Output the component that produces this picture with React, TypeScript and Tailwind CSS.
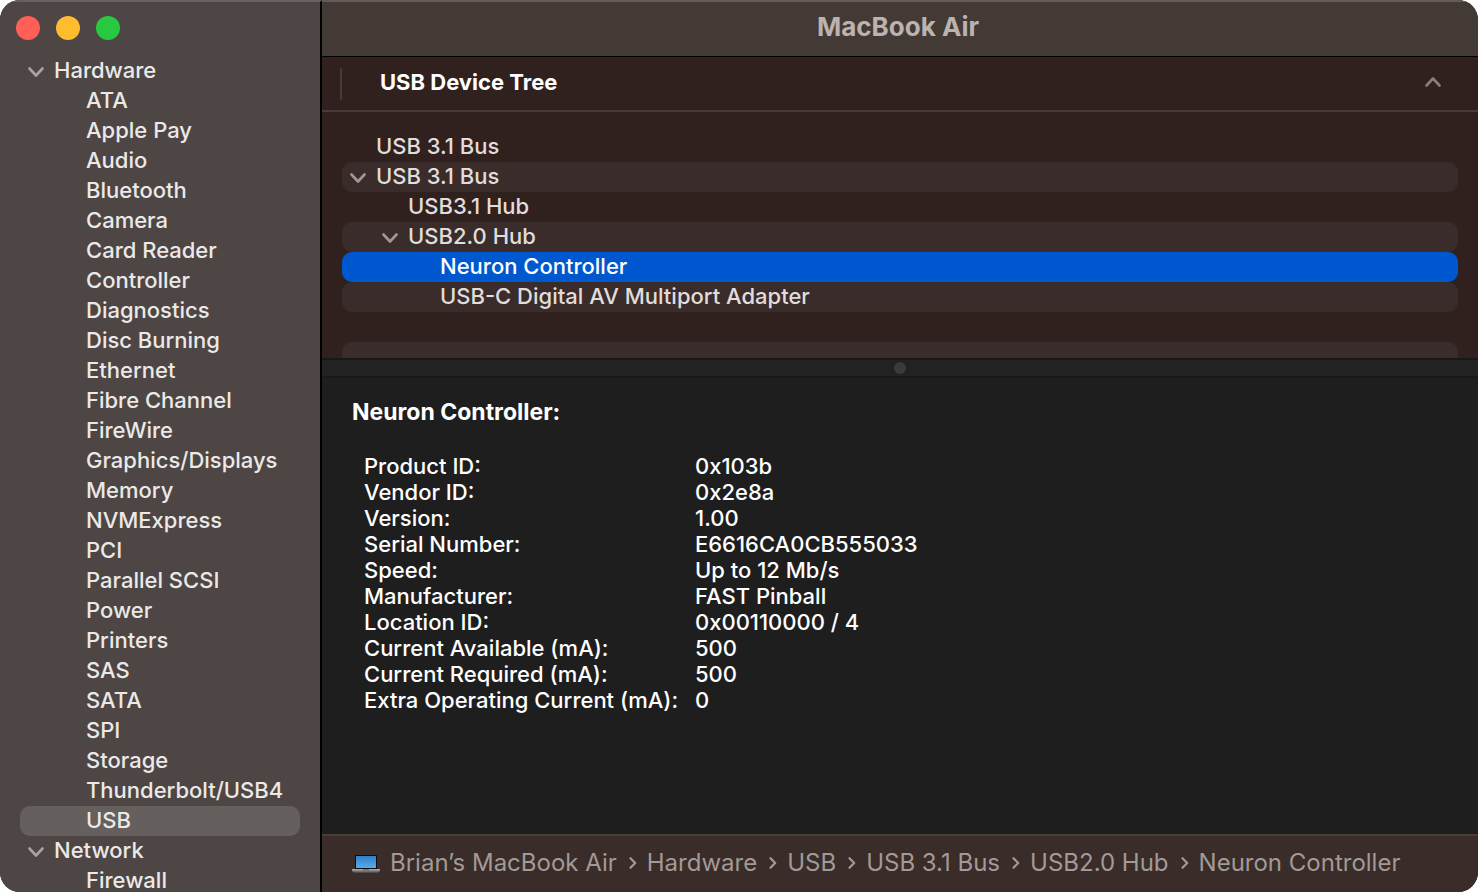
import { useState } from 'react';
import clsx from 'clsx';

const hardware = [
  'ATA', 'Apple Pay', 'Audio', 'Bluetooth', 'Camera', 'Card Reader', 'Controller',
  'Diagnostics', 'Disc Burning', 'Ethernet', 'Fibre Channel', 'FireWire',
  'Graphics/Displays', 'Memory', 'NVMExpress', 'PCI', 'Parallel SCSI', 'Power',
  'Printers', 'SAS', 'SATA', 'SPI', 'Storage', 'Thunderbolt/USB4', 'USB',
];

const network = ['Firewall'];

const devices = [
  { name: 'USB 3.1 Bus', indent: 'pl-[34px]' },
  { name: 'USB 3.1 Bus', indent: 'pl-2', open: true },
  { name: 'USB3.1 Hub', indent: 'pl-[66px]' },
  { name: 'USB2.0 Hub', indent: 'pl-10', open: true },
  { name: 'Neuron Controller', indent: 'pl-[98px]' },
  { name: 'USB-C Digital AV Multiport Adapter', indent: 'pl-[98px]' },
];

const details = [
  ['Product ID:', '0x103b'],
  ['Vendor ID:', '0x2e8a'],
  ['Version:', '1.00'],
  ['Serial Number:', 'E6616CA0CB555033'],
  ['Speed:', 'Up to 12 Mb/s'],
  ['Manufacturer:', 'FAST Pinball'],
  ['Location ID:', '0x00110000 / 4'],
  ['Current Available (mA):', '500'],
  ['Current Required (mA):', '500'],
  ['Extra Operating Current (mA):', '0'],
];

const path = ['Brian’s MacBook Air', 'Hardware', 'USB', 'USB 3.1 Bus', 'USB2.0 Hub', 'Neuron Controller'];

function Chevron({ className }: { className?: string }) {
  return (
    <svg viewBox="0 0 16 10" className={clsx('h-[10px] w-4 shrink-0', className)} fill="none" stroke="currentColor" strokeWidth="2.6" strokeLinecap="round" strokeLinejoin="round">
      <path d="M1.500 1.500 8 8.500l6.500-7" />
    </svg>
  );
}

function Laptop() {
  return (
    <svg viewBox="0 0 28 18" className="h-[18px] w-7 shrink-0">
      <defs>
        <linearGradient id="screen" x1="0" y1="0" x2="0" y2="1">
          <stop offset="0" stopColor="#2f7fc4" />
          <stop offset="1" stopColor="#58acee" />
        </linearGradient>
      </defs>
      <rect x="3" y="0" width="22" height="15" rx="1" fill="#0c0c0c" />
      <rect x="4" y="1" width="20" height="12" fill="url(#screen)" />
      <path d="M0 14h28v2l-2 1.500H2L0 16z" fill="#6d6f70" />
      <path d="M0 14h28v1.500H0z" fill="#a2a4a5" />
      <path d="M11 14h6v1.500h-6z" fill="#6d6f70" />
    </svg>
  );
}

function Group({ title, items, selected, onSelect }: { title: string; items: string[]; selected: string; onSelect: (item: string) => void }) {
  return (
    <li>
      <button type="button" aria-expanded="true" className="flex h-[30px] w-full items-center gap-[10px] pb-[2px] pl-2">
        <Chevron className="mt-1 text-[#a8a3a1]" />
        {title}
      </button>
      <ul>
        {items.map((item) => (
          <li key={item}>
            <button
              type="button"
              onClick={() => onSelect(item)}
              className={clsx('flex h-[30px] w-full items-center rounded-[10px] pb-[2px] pl-[66px]', item === selected && 'bg-[#65605d]')}
            >
              {item}
            </button>
          </li>
        ))}
      </ul>
    </li>
  );
}

export default function App() {
  const [section, setSection] = useState('USB');
  const [device, setDevice] = useState(4);

  return (
    <div className="h-screen bg-white font-['Inter',sans-serif] text-[22px] leading-[26px]">
      <div className="flex h-full overflow-hidden rounded-[20px] bg-[#1e1e1e]">
        {/* Sidebar */}
        <aside className="flex w-[322px] shrink-0 flex-col border-t-2 border-r-2 border-t-[#676160] border-r-black bg-[#4e4644] text-[#ebe9e8]">
          <div className="flex h-[54px] shrink-0 items-start gap-4 px-4 pt-[14px]">
            <button type="button" aria-label="Close" className="size-6 rounded-full bg-[#ff5f57]" />
            <button type="button" aria-label="Minimise" className="size-6 rounded-full bg-[#febc2e]" />
            <button type="button" aria-label="Zoom" className="size-6 rounded-full bg-[#28c840]" />
          </div>
          <ul className="min-h-0 flex-1 overflow-hidden px-5 leading-6 font-[450]">
            <Group title="Hardware" items={hardware} selected={section} onSelect={setSection} />
            <Group title="Network" items={network} selected={section} onSelect={setSection} />
          </ul>
        </aside>

        <main className="flex min-w-0 flex-1 flex-col">
          <header className="flex h-[57px] shrink-0 items-center justify-center border-t-2 border-b border-t-[#645b58] border-b-black bg-[#443a35] pr-1 pb-1">
            <h1 className="text-[26px] font-bold text-[#bcb2af]">MacBook Air</h1>
          </header>

          {/* Device tree */}
          <section className="flex h-[303px] shrink-0 flex-col border-b-2 border-[#191717] bg-[#30211f]">
            <div className="flex h-[55px] shrink-0 items-center border-b-2 border-[#483a38] pr-[37px] pl-[18px]">
              <span className="h-8 w-[2px] bg-[#483a38]" />
              <div className="flex flex-1 items-center justify-between pb-1 pl-[38px]">
                <h2 className="font-bold text-white">USB Device Tree</h2>
                <button type="button" aria-label="Sort" className="text-[#8b7d79]">
                  <Chevron className="rotate-180" />
                </button>
              </div>
            </div>
            <ul className="min-h-0 flex-1 overflow-hidden px-5 pt-5 leading-6 font-medium text-[#e0dddc]">
              {devices.map((d, i) => (
                <li key={i}>
                  <button
                    type="button"
                    onClick={() => setDevice(i)}
                    className={clsx(
                      'flex h-[30px] w-full items-center gap-[10px] rounded-[10px] pb-[2px]',
                      d.indent,
                      i === device ? 'bg-[#0058d0] text-white' : i % 2 === 1 && 'bg-[#3a2c2a]',
                    )}
                  >
                    {d.open && <Chevron className="mt-1 text-[#a09896]" />}
                    {d.name}
                  </button>
                </li>
              ))}
              <li className="mt-[30px] h-[30px] rounded-[10px] bg-[#3a2c2a]" />
            </ul>
          </section>

          {/* Split handle */}
          <div className="flex h-[18px] shrink-0 justify-center border-b-2 border-[#191919] bg-[#222222] pt-[2px]">
            <span className="size-3 rounded-full bg-[#3a3a3a]" />
          </div>

          <section className="min-h-0 flex-1 overflow-hidden px-[30px] pt-[21px] text-white">
            <h2 className="text-[23px] font-bold">Neuron Controller:</h2>
            <table className="mt-7 ml-3 font-medium">
              <tbody>
                {details.map(([label, value]) => (
                  <tr key={label}>
                    <th scope="row" className="w-[331px] p-0 text-left font-medium whitespace-nowrap">{label}</th>
                    <td className="p-0">{value}</td>
                  </tr>
                ))}
              </tbody>
            </table>
          </section>

          <nav aria-label="Path" className="flex h-[58px] shrink-0 items-center gap-[10px] border-t-2 border-[#4b3e3a] bg-[#392c29] px-[30px] text-[24px] text-[#a29a97]">
            <Laptop />
            <ol className="flex items-center pb-[2px] whitespace-nowrap">
              {path.map((name, i) => (
                <li key={name} className="flex items-center">
                  {i > 0 && (
                    <svg viewBox="0 0 8 12" className="mr-[10px] ml-3 h-3 w-2" fill="none" stroke="currentColor" strokeWidth="2.200" strokeLinecap="round" strokeLinejoin="round">
                      <path d="M1.500 1.200 6.200 6 1.500 10.800" />
                    </svg>
                  )}
                  {name}
                </li>
              ))}
            </ol>
          </nav>
        </main>
      </div>
    </div>
  );
}
